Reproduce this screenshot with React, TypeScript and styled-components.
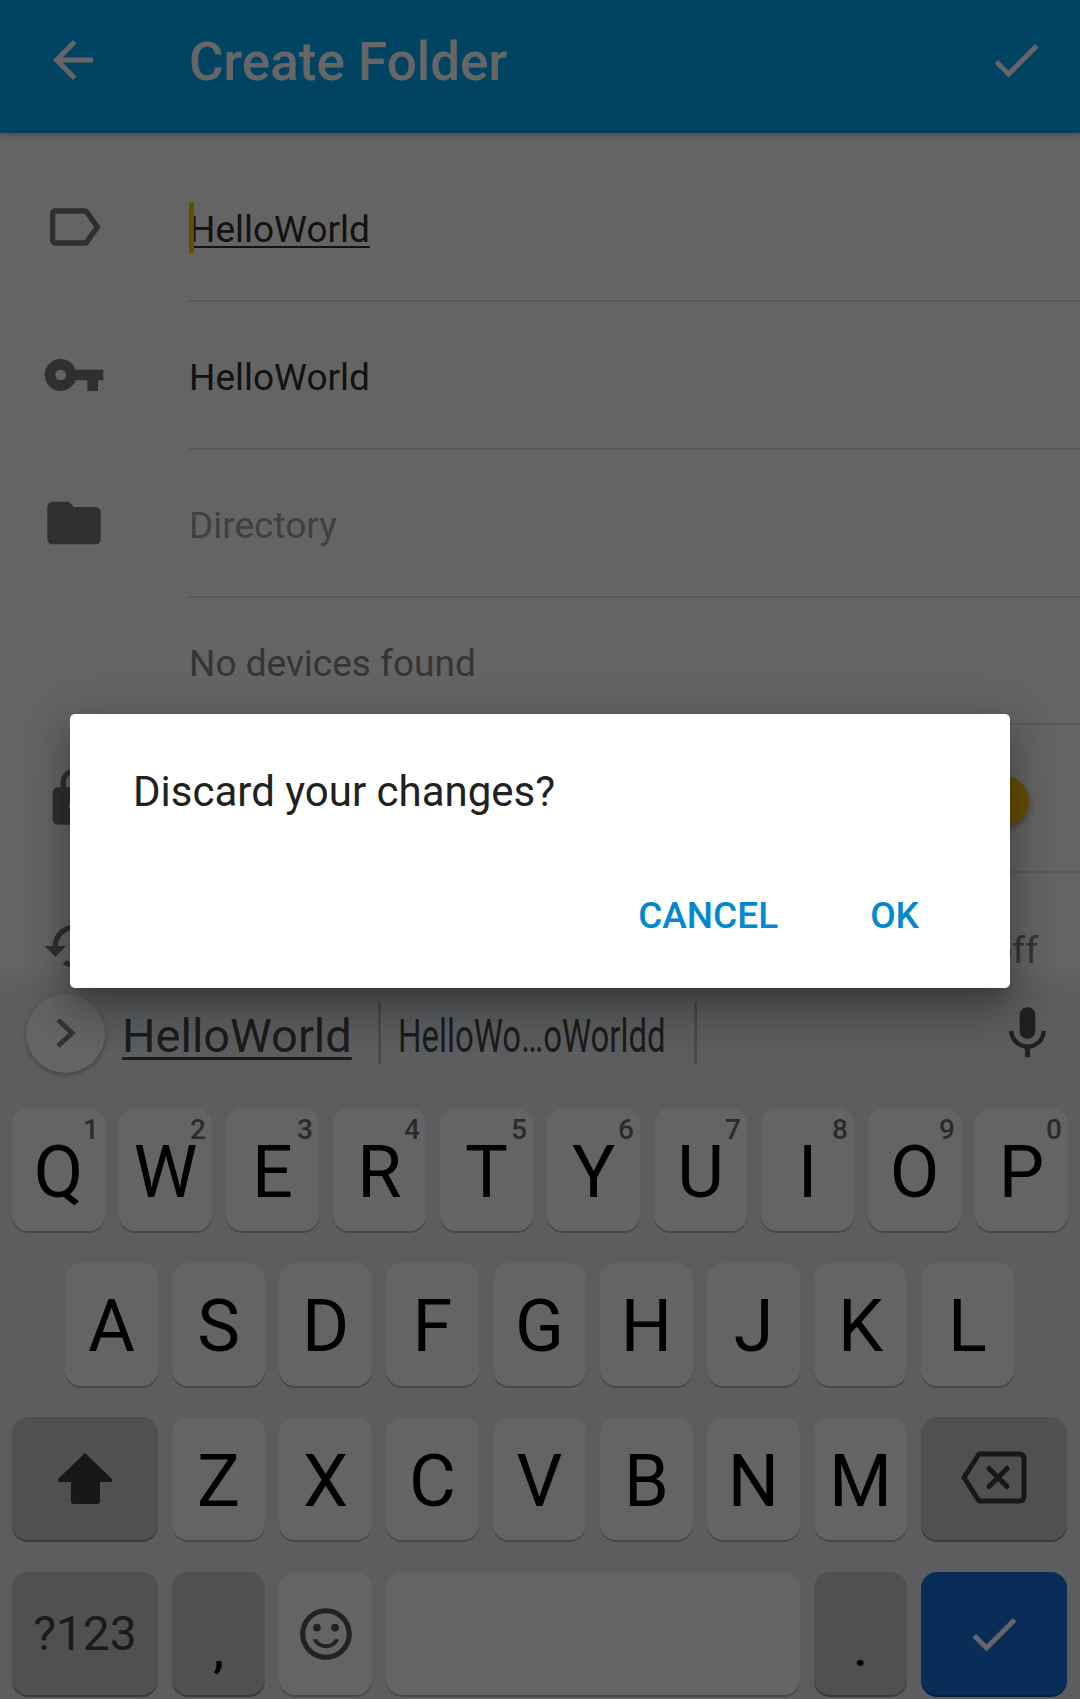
import React from 'react'
import styled, { createGlobalStyle } from 'styled-components'

const GlobalStyle = createGlobalStyle`
    html, body {
        margin: 0;
        padding: 0;
        background: #fafafa;
    }
    * {
        box-sizing: border-box;
    }
`

const Screen = styled.div`
    position: relative;
    display: flex;
    flex-direction: column;
    width: 1080px;
    height: 1699px;
    overflow: hidden;
    background: #fafafa;
    font-family: Roboto, "Liberation Sans", sans-serif;
`

const Header = styled.header`
    position: relative;
    z-index: 1;
    flex: none;
    display: flex;
    align-items: center;
    height: 133px;
    padding: 0 34px 13px 43px;
    background: #03a9f4;
    box-shadow: 0 2px 6px rgba(0, 0, 0, 0.25);
    color: #fff;
`

const HeaderTitle = styled.h1`
    flex: 1;
    margin: 0 0 0 86px;
    padding-top: 4px;
    font-size: 53px;
    font-weight: 500;
    line-height: 60px;
`

const Glyph = styled.svg`
    flex: none;
    display: block;
    fill: currentColor;
`

const Form = styled.main`
    flex: 1;
    min-height: 0;
    overflow: hidden;
    padding-top: 20px;
`

const Row = styled.div<{ $height?: number }>`
    display: flex;
    height: ${p => p.$height ?? 148}px;
`

const RowIcon = styled.div`
    flex: none;
    display: flex;
    align-items: center;
    width: 189px;
    padding-left: 42px;
    color: #757575;
`

const RowBody = styled.div<{ $divider?: boolean; $shift?: number }>`
    position: relative;
    flex: 1;
    display: flex;
    align-items: center;
    justify-content: space-between;
    margin-bottom: -1px;
    padding-top: ${p => p.$shift ?? 6}px;
    border-bottom: ${p => (p.$divider === false ? 'none' : '2px solid #dedede')};
    font-size: 37px;
`

const Value = styled.span`
    position: relative;
    color: #2e2e2e;
`

const ComposingValue = styled(Value)`
    text-decoration: underline;
    text-decoration-thickness: 2px;
    text-underline-offset: 4px;
`

const Caret = styled.i`
    position: absolute;
    left: 0;
    top: -6px;
    width: 5px;
    height: 51px;
    background: #ffc107;
`

const Hint = styled.span`
    color: #a0a0a0;
`

const Muted = styled.span`
    color: #848484;
`

const TrailingOff = styled(Muted)`
    margin-left: auto;
    margin-right: 42px;
`

const Switch = styled.div`
    position: relative;
    margin-left: auto;
    margin-right: 51px;
    width: 50px;
    height: 50px;
    border-radius: 50%;
    background: #ffc107;
    box-shadow: 0 3px 6px rgba(0, 0, 0, 0.35);
`

const Keyboard = styled.section`
    flex: none;
    display: flex;
    flex-direction: column;
    height: 731px;
    background: linear-gradient(#f6f6f7 0, #e6e9ee 26px);
`

const SuggestionStrip = styled.div`
    flex: none;
    display: flex;
    align-items: center;
    height: 130px;
    margin-bottom: 10px;
    padding: 0 21px 0 26px;
    color: #484848;
    font-size: 47px;
`

const ExpandButton = styled.div`
    flex: none;
    display: flex;
    align-items: center;
    justify-content: center;
    width: 79px;
    height: 79px;
    margin-right: 17px;
    border-radius: 50%;
    background: #fafafa;
    box-shadow: 0 2px 5px rgba(0, 0, 0, 0.3);
    color: #808080;
`

const Suggestion = styled.span`
    flex: none;
    width: 231px;
    margin-right: 25px;
    padding-top: 4px;
    text-decoration: underline;
    text-decoration-thickness: 3px;
    text-underline-offset: 5px;
`

const StripDivider = styled.i`
    flex: none;
    width: 3px;
    height: 62px;
    background: #b6b9bd;
`

const CondensedSlot = styled.div`
    flex: none;
    width: 266px;
    margin: 0 30px 0 17px;
    padding-top: 4px;
    white-space: nowrap;
`

const Condensed = styled.span`
    display: inline-block;
    transform: scaleX(0.7);
    transform-origin: left center;
`

const MicSlot = styled.div`
    margin-left: auto;
    color: #505050;
`

const KeyRows = styled.div`
    display: flex;
    flex-direction: column;
    gap: 29.67px;
`

const KeyRow = styled.div<{ $inset?: number }>`
    display: flex;
    gap: 14px;
    padding-left: ${p => p.$inset ?? 12}px;
`

const toneColors = { light: '#fafafa', dark: '#c8c9cd', action: '#1a6fdc' }

const Key = styled.div<{ $width?: number; $tone?: keyof typeof toneColors; $low?: boolean }>`
    position: relative;
    flex: none;
    display: flex;
    align-items: ${p => (p.$low ? 'flex-end' : 'center')};
    justify-content: center;
    width: ${p => p.$width ?? 93}px;
    height: 125px;
    border-radius: 16px;
    background: ${p => toneColors[p.$tone ?? 'light']};
    box-shadow: inset 0 -2px 0 rgba(0, 0, 0, 0.28);
    color: #000;
    font-size: 72px;
    line-height: 1;
`

const Letter = styled.span`
    padding-top: 4px;
`

const NumberBadge = styled.span`
    position: absolute;
    top: 8px;
    right: 6px;
    color: #6c6c6c;
    font-size: 28px;
    font-weight: 500;
    line-height: 28px;
`

const SymbolsLabel = styled.span`
    color: #444;
    font-size: 48px;
`

const Punctuation = styled.span`
    padding-bottom: 23px;
    font-size: 48px;
    font-weight: 500;
    line-height: 48px;
`

const IconInk = styled.div<{ $color: string; $lift?: number }>`
    margin-top: ${p => -(p.$lift ?? 0)}px;
    color: ${p => p.$color};
`

const Scrim = styled.div`
    position: absolute;
    inset: 0;
    z-index: 2;
    display: flex;
    align-items: center;
    justify-content: center;
    padding-top: 3px;
    background: rgba(0, 0, 0, 0.6);
`

const Dialog = styled.div`
    display: flex;
    flex-direction: column;
    width: 940px;
    height: 274px;
    padding: 52px 91px 51px 63px;
    border-radius: 5px;
    background: #fff;
    box-shadow: 0 24px 38px 3px rgba(0, 0, 0, 0.18), 0 9px 46px 8px rgba(0, 0, 0, 0.14), 0 11px 15px -7px rgba(0, 0, 0, 0.2);
`

const DialogText = styled.p`
    margin: 0;
    color: #212121;
    font-size: 42px;
    line-height: 52px;
`

const DialogActions = styled.div`
    display: flex;
    justify-content: flex-end;
    gap: 92px;
    margin-top: auto;
`

const DialogButton = styled.span`
    color: #0288d1;
    font-size: 37px;
    font-weight: 500;
    line-height: 42px;
`

type IconProps = { d: string; size?: number }

const Icon = ({ d, size = 60 }: IconProps) => (
    <Glyph width={size} height={size} viewBox="0 0 24 24">
        <path d={d} />
    </Glyph>
)

const ICONS = {
    back: 'M20 11H7.83l5.59-5.59L12 4l-8 8 8 8 1.41-1.41L7.83 13H20v-2z',
    check: 'M9 16.17L4.83 12l-1.41 1.41L9 19 21 7l-1.41-1.41z',
    label: 'M17.63 5.84C17.27 5.33 16.67 5 16 5L5 5.01C3.9 5.01 3 5.9 3 7v10c0 1.1.9 1.99 2 1.99L16 19c.67 0 1.27-.33 1.63-.84L22 12l-4.37-6.16zM16 17H5V7h11l3.55 5L16 17z',
    key: 'M12.65 10C11.83 7.67 9.61 6 7 6c-3.31 0-6 2.69-6 6s2.69 6 6 6c2.61 0 4.83-1.67 5.65-4H17v4h4v-4h2v-4H12.65zM7 14c-1.1 0-2-.9-2-2s.9-2 2-2 2 .9 2 2-.9 2-2 2z',
    folder: 'M10 4H4c-1.1 0-1.99.9-1.99 2L2 18c0 1.1.9 2 2 2h16c1.1 0 2-.9 2-2V8c0-1.1-.9-2-2-2h-8l-2-2z',
    lock: 'M18 8h-1V6c0-2.76-2.24-5-5-5S7 3.24 7 6v2H6c-1.1 0-2 .9-2 2v10c0 1.1.9 2 2 2h12c1.1 0 2-.9 2-2V10c0-1.1-.9-2-2-2zm-6 9c-1.1 0-2-.9-2-2s.9-2 2-2 2 .9 2 2-.9 2-2 2zm3.1-9H8.9V6c0-1.71 1.39-3.1 3.1-3.1 1.71 0 3.1 1.39 3.1 3.1v2z',
    cached: 'M19 8l-4 4h3c0 3.31-2.69 6-6 6-1.01 0-1.97-.25-2.8-.7l-1.46 1.46C8.97 19.54 10.43 20 12 20c4.42 0 8-3.58 8-8h3l-4-4zM6 12c0-3.31 2.69-6 6-6 1.01 0 1.97.25 2.8.7l1.46-1.46C15.03 4.46 13.57 4 12 4c-4.42 0-8 3.58-8 8H1l4 4 4-4H6z',
    mic: 'M12 14c1.66 0 2.99-1.34 2.99-3L15 5c0-1.66-1.34-3-3-3S9 3.34 9 5v6c0 1.66 1.34 3 3 3zm5.3-3c0 3-2.54 5.1-5.3 5.1S6.7 14 6.7 11H5c0 3.41 2.72 6.23 6 6.72V21h2v-3.28c3.28-.48 6-3.3 6-6.72h-1.7z',
    smile: 'M12 16c-1.48 0-2.75-.81-3.45-2H6.88c.8 2.05 2.79 3.5 5.12 3.5s4.32-1.45 5.12-3.5h-1.67c-.7 1.19-1.97 2-3.45 2zm-.01-14C6.47 2 2 6.48 2 12s4.47 10 9.99 10C17.52 22 22 17.52 22 12S17.52 2 11.99 2zM12 20c-4.42 0-8-3.58-8-8s3.58-8 8-8 8 3.58 8 8-3.58 8-8 8zM15.5 8a1.5 1.5 0 1 0 0 3 1.5 1.5 0 0 0 0-3zM8.5 8a1.5 1.5 0 1 0 0 3 1.5 1.5 0 0 0 0-3z',
}

const ShiftIcon = () => (
    <Glyph width={56} height={52} viewBox="0 0 56 52">
        <path d="M28 1 L55 27 Q56 30 53 30 H43 V49 Q43 52 40 52 H17 Q14 52 14 49 V30 H3 Q0 30 1 27 Z" />
    </Glyph>
)

const BackspaceIcon = () => (
    <svg width={66} height={53} viewBox="0 0 66 53" fill="none" stroke="currentColor" strokeWidth={5} strokeLinecap="round" strokeLinejoin="round">
        <path d="M18 3 H58 Q63 3 63 8 V45 Q63 50 58 50 H18 L3 26.5 Z" />
        <path d="M28 17.5 L46 35.5 M46 17.5 L28 35.5" />
    </svg>
)

const ChevronIcon = () => (
    <svg width={22} height={32} viewBox="0 0 22 32" fill="none" stroke="currentColor" strokeWidth={5}>
        <path d="M3 3 L17 16 L3 29" />
    </svg>
)

const TOP_ROW = ['Q', 'W', 'E', 'R', 'T', 'Y', 'U', 'I', 'O', 'P']
const HOME_ROW = ['A', 'S', 'D', 'F', 'G', 'H', 'J', 'K', 'L']
const BOTTOM_ROW = ['Z', 'X', 'C', 'V', 'B', 'N', 'M']

const App: React.FC = () => {
    return (
        <Screen>
            <GlobalStyle />

            <Header>
                <Icon d={ICONS.back} />
                <HeaderTitle>Create Folder</HeaderTitle>
                <Icon d={ICONS.check} />
            </Header>

            <Form>
                <Row>
                    <RowIcon><Icon d={ICONS.label} size={64} /></RowIcon>
                    <RowBody>
                        <ComposingValue>
                            <Caret />
                            HelloWorld
                        </ComposingValue>
                    </RowBody>
                </Row>
                <Row>
                    <RowIcon><Icon d={ICONS.key} size={64} /></RowIcon>
                    <RowBody><Value>HelloWorld</Value></RowBody>
                </Row>
                <Row>
                    <RowIcon><Icon d={ICONS.folder} size={64} /></RowIcon>
                    <RowBody><Hint>Directory</Hint></RowBody>
                </Row>
                <Row $height={127}>
                    <RowIcon />
                    <RowBody $shift={6}><Muted>No devices found</Muted></RowBody>
                </Row>
                <Row>
                    <RowIcon><Icon d={ICONS.lock} size={64} /></RowIcon>
                    <RowBody><Switch /></RowBody>
                </Row>
                <Row>
                    <RowIcon><Icon d={ICONS.cached} size={64} /></RowIcon>
                    <RowBody $divider={false} $shift={8}><TrailingOff>off</TrailingOff></RowBody>
                </Row>
            </Form>

            <Keyboard>
                <SuggestionStrip>
                    <ExpandButton><ChevronIcon /></ExpandButton>
                    <Suggestion>HelloWorld</Suggestion>
                    <StripDivider />
                    <CondensedSlot><Condensed>HelloWo…oWorldd</Condensed></CondensedSlot>
                    <StripDivider />
                    <MicSlot><Icon d={ICONS.mic} size={63} /></MicSlot>
                </SuggestionStrip>

                <KeyRows>
                    <KeyRow>
                        {TOP_ROW.map((letter, i) => (
                            <Key key={letter}>
                                <Letter>{letter}</Letter>
                                <NumberBadge>{(i + 1) % 10}</NumberBadge>
                            </Key>
                        ))}
                    </KeyRow>
                    <KeyRow $inset={65}>
                        {HOME_ROW.map(letter => <Key key={letter}><Letter>{letter}</Letter></Key>)}
                    </KeyRow>
                    <KeyRow>
                        <Key $width={146} $tone="dark">
                            <IconInk $color="#3c3c3c" $lift={4}><ShiftIcon /></IconInk>
                        </Key>
                        {BOTTOM_ROW.map(letter => <Key key={letter}><Letter>{letter}</Letter></Key>)}
                        <Key $width={146} $tone="dark">
                            <IconInk $color="#3c3c3c"><BackspaceIcon /></IconInk>
                        </Key>
                    </KeyRow>
                    <KeyRow>
                        <Key $width={146} $tone="dark"><SymbolsLabel>?123</SymbolsLabel></Key>
                        <Key $tone="dark" $low><Punctuation>,</Punctuation></Key>
                        <Key>
                            <IconInk $color="#555555"><Icon d={ICONS.smile} size={62} /></IconInk>
                        </Key>
                        <Key $width={414} />
                        <Key $tone="dark" $low><Punctuation>.</Punctuation></Key>
                        <Key $width={146} $tone="action">
                            <IconInk $color="#ffffff"><Icon d={ICONS.check} /></IconInk>
                        </Key>
                    </KeyRow>
                </KeyRows>
            </Keyboard>

            <Scrim>
                <Dialog>
                    <DialogText>Discard your changes?</DialogText>
                    <DialogActions>
                        <DialogButton>CANCEL</DialogButton>
                        <DialogButton>OK</DialogButton>
                    </DialogActions>
                </Dialog>
            </Scrim>
        </Screen>
    )
}

export default App
